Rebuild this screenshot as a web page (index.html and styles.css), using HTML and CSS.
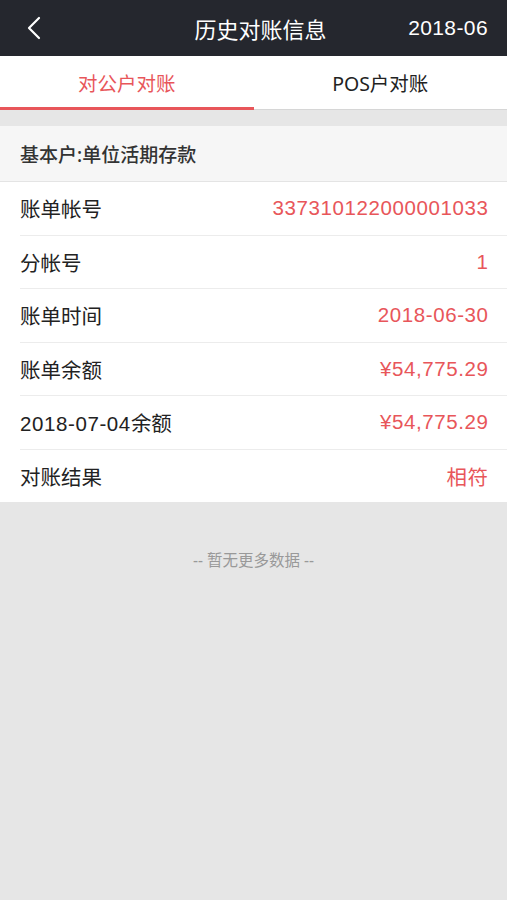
FILE: index.html
```html
<!DOCTYPE html>
<html lang="zh">
<head>
  <meta charset="UTF-8" />
  <meta name="viewport" content="width=device-width, initial-scale=1.0"/>
  <title>历史对账信息</title>
  <link rel="stylesheet" href="styles.css">
</head>
<body>
  <header class="navbar">
    <span class="back">
      <svg width="16" height="24" viewBox="0 0 16 24"><path d="M13 2 L3 12 L13 22" fill="none" stroke="#fff" stroke-width="2.2" stroke-linecap="round" stroke-linejoin="round"/></svg>
    </span>
    <h1 class="title">历史对账信息</h1>
    <span class="month">2018-06</span>
  </header>

  <nav class="tabs">
    <div class="tab active">对公户对账</div>
    <div class="tab">POS户对账</div>
  </nav>

  <div class="gap"></div>

  <section class="card">
    <div class="card-head">基本户:单位活期存款</div>
    <div class="row"><span class="label">账单帐号</span><span class="value">337310122000001033</span></div>
    <div class="row"><span class="label">分帐号</span><span class="value">1</span></div>
    <div class="row"><span class="label">账单时间</span><span class="value">2018-06-30</span></div>
    <div class="row"><span class="label">账单余额</span><span class="value">¥54,775.29</span></div>
    <div class="row"><span class="label"><span class="num">2018-07-04</span>余额</span><span class="value">¥54,775.29</span></div>
    <div class="row last"><span class="label">对账结果</span><span class="value">相符</span></div>
  </section>

  <p class="nomore">-- 暂无更多数据 --</p>
</body>
</html>
```

FILE: styles.css
```css
body {
  font-family: 'Noto Sans', 'Noto Sans CJK SC', sans-serif;
  background: #e6e6e6;
  margin: 0;
  padding: 0;
  min-height: 100vh;
}

.navbar {
  height: 56px;
  background-color: #25272e;
  display: flex;
  align-items: center;
  justify-content: space-between;
  padding: 0 19px 0 26px;
  position: relative;
  color: #fff;
}

.back {
  display: flex;
  align-items: center;
}

.title {
  position: absolute;
  left: 14px;
  right: 0;
  text-align: center;
  margin: 0;
  font-size: 22px;
  font-weight: normal;
  pointer-events: none;
}

.month {
  font-family: 'Liberation Sans', sans-serif;
  font-size: 21px;
  letter-spacing: 0.4px;
}

.tabs {
  display: flex;
  height: 53px;
  background-color: #fff;
  border-bottom: 1px solid #d6d6d6;
}

.tab {
  flex: 1;
  display: flex;
  align-items: center;
  justify-content: center;
  font-size: 19.5px;
  color: #222;
  border-bottom: 3px solid transparent;
  margin-bottom: -1px;
  padding-top: 2px;
}

.tab.active {
  color: #e8565a;
  border-bottom-color: #e8565a;
}

.gap {
  height: 16px;
}

.card {
  background-color: #fff;
}

.card-head {
  height: 55px;
  display: flex;
  align-items: center;
  padding: 0 20px;
  background-color: #f6f6f6;
  border-bottom: 1px solid #e4e4e4;
  font-size: 19px;
  font-weight: 500;
  color: #333;
}

.row {
  height: 52.5px;
  margin-left: 20px;
  padding-right: 19px;
  display: flex;
  align-items: center;
  justify-content: space-between;
  border-bottom: 1px solid #ececec;
  font-size: 20.5px;
}

.row.last {
  border-bottom: none;
}

.label {
  color: #222;
}

.num {
  font-family: 'Liberation Sans', sans-serif;
  letter-spacing: 0.6px;
}

.value {
  color: #e8565a;
  font-family: 'Liberation Sans', 'Noto Sans CJK SC', sans-serif;
  letter-spacing: 0.6px;
  margin-right: -0.6px;
}

.nomore {
  margin: 46px 0 0;
  text-align: center;
  font-size: 15.5px;
  color: #999;
}
```
